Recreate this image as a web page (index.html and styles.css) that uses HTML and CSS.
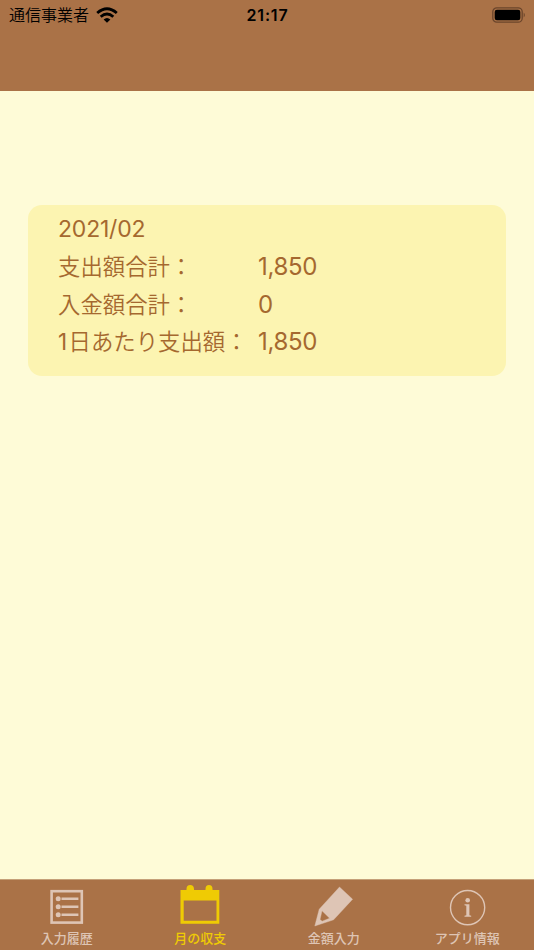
FILE: index.html
```html
<!DOCTYPE html>
<html lang="ja">
<head>
<meta charset="utf-8">
<title>月の収支</title>
<link rel="stylesheet" href="styles.css">
</head>
<body>
<header class="header">
  <div class="status">
    <div class="carrier">
      <span>通信事業者</span>
      <svg class="wifi" viewBox="0 0 22 16" width="22" height="16">
        <g fill="none" stroke="#000" stroke-width="2.8">
          <path d="M1.2 6Q11 -2.4 20.8 6"/>
          <path d="M4.7 9.8Q11 4.2 17.3 9.8"/>
        </g>
        <path d="M7.6 12.5Q11 9.5 14.4 12.5L11 15.8Z"/>
      </svg>
    </div>
    <time class="time">21:17</time>
    <svg class="battery" viewBox="0 0 34 16" width="34" height="16">
      <rect x=".8" y=".8" width="29.4" height="14.4" rx="4" fill="none" stroke="#6b452b" stroke-width="1.3"/>
      <rect x="2.7" y="2.7" width="25.6" height="10.6" rx="2.2"/>
      <path d="M31.7 5.5Q34 8 31.7 10.5Z" fill="#6b452b"/>
    </svg>
  </div>
</header>
<main class="main">
  <section class="card">
    <h1 class="month">2021/02</h1>
    <dl class="totals">
      <dt>支出額合計：</dt><dd>1,850</dd>
      <dt>入金額合計：</dt><dd>0</dd>
      <dt><span class="num">1</span>日あたり支出額：</dt><dd>1,850</dd>
    </dl>
  </section>
</main>
<nav class="tabs">
  <a class="tab">
    <svg viewBox="0 0 40 44" width="40" height="44" fill="none" stroke="currentColor">
      <rect x="4.6" y="11.2" width="30.2" height="31.4" stroke-width="2.6"/>
      <path d="M14.5 18.8H31.4M14.5 26.7H31.4M14.5 34.7H31.4" stroke-width="2.4"/>
      <g fill="currentColor" stroke="none"><circle cx="11.2" cy="18.8" r="2.5"/><circle cx="11.2" cy="26.7" r="2.5"/><circle cx="11.2" cy="34.7" r="2.5"/></g>
    </svg>
    <span>入力履歴</span>
  </a>
  <a class="tab active">
    <svg viewBox="0 0 40 44" width="40" height="44" fill="currentColor">
      <path fill-rule="evenodd" d="M.5 10H6.5V9Q6.5 5 10.2 5T14 9V10H25.5V9Q25.5 5 29 5T32.5 9V10H39.3V43.7H.5ZM3.7 20.5V40.7H36.5V20.5Z"/>
    </svg>
    <span>月の収支</span>
  </a>
  <a class="tab">
    <svg viewBox="0 0 40 48" width="40" height="48" fill="currentColor">
      <path fill-rule="evenodd" d="M25.5 7 38.6 19.2 19.6 39.8 0.8 46 5.2 29.2ZM8 30.8 6 39.6 8.2 41.2 15.6 38.2Z" stroke="currentColor" stroke-width=".4" stroke-linejoin="round"/>
    </svg>
    <span>金額入力</span>
  </a>
  <a class="tab">
    <svg viewBox="0 0 40 48" width="40" height="48" fill="currentColor">
      <circle cx="20.6" cy="27.6" r="17.1" fill="none" stroke="currentColor" stroke-width="1.4"/>
      <circle cx="20.7" cy="20.2" r="2.3"/>
      <path d="M17.5 24.3H22.4V35.3L24.2 35.8V36.8H17.5V35.8L19.3 35.3V25.7L17.5 25.3Z"/>
    </svg>
    <span>アプリ情報</span>
  </a>
</nav>
</body>
</html>
```
FILE: styles.css
```css
* { box-sizing: border-box; }

body {
  margin: 0;
  height: 950px;
  display: flex;
  flex-direction: column;
  background: #fefbd7;
  font-family: Inter, "Noto Sans CJK JP", sans-serif;
  overflow: hidden;
}

.header {
  height: 91px;
  background: #aa7247;
}

.status {
  display: grid;
  grid-template-columns: 1fr auto 1fr;
  align-items: center;
  height: 29px;
  padding: 0 8px 0 9px;
  color: #000;
}

.carrier {
  display: flex;
  align-items: center;
  gap: 7px;
  font-size: 16px;
  font-weight: 350;
  line-height: 20px;
}

.time {
  font-size: 16px;
  font-weight: 600;
  letter-spacing: .8px;
}

.battery { justify-self: end; }

.main {
  flex: 1;
  padding: 114px 28px 0;
}

.card {
  height: 171px;
  padding: 5px 30px 4px;
  border-radius: 14px;
  background: #fcf4b1;
  color: #a5682f;
}

.month {
  margin: 0;
  font-size: 23px;
  font-weight: 400;
  letter-spacing: -.2px;
  line-height: 38px;
}

.totals {
  display: grid;
  grid-template-columns: 200px 1fr;
  grid-auto-rows: 37.7px;
  margin: 0;
  line-height: 37.7px;
}

.totals dt {
  margin-top: -1px;
  font-family: "Noto Sans CJK JP", sans-serif;
  font-size: 22.4px;
  font-weight: 350;
  white-space: nowrap;
}

.totals dd {
  margin: 0;
  font-size: 24px;
  letter-spacing: -.3px;
}

.num {
  display: inline-block;
  width: 10.5px;
  font-family: Inter, sans-serif;
  font-weight: 400;
}

.tabs {
  display: grid;
  grid-template-columns: repeat(4, 1fr);
  height: 71px;
  border-top: 1px solid #c5a078;
  background: #aa7247;
}

.tab {
  display: flex;
  flex-direction: column;
  align-items: center;
  justify-content: space-between;
  padding-bottom: 2px;
  color: #dec5b5;
  font-size: 13px;
  font-weight: 500;
  line-height: 19px;
}

.active { color: #efcb04; }
```
